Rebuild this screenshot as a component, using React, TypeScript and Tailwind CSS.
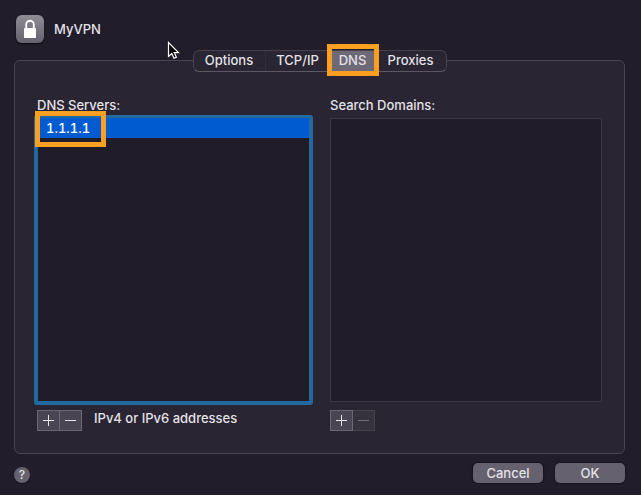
import { useState } from 'react';

const tabs = [
  { name: 'Options', width: 'w-[72px]' },
  { name: 'TCP/IP', width: 'w-[64px]' },
  { name: 'DNS', width: 'w-[46px]' },
  { name: 'Proxies', width: 'w-[70px]' },
];

const dnsServers = ['1.1.1.1'];

function LockIcon() {
  return (
    <div className="flex h-7 w-7 items-center justify-center rounded-md bg-linear-to-b from-[#918d97] to-[#65616d] shadow-[0_1px_2px_#0d0a12]">
      <svg width="14" height="20" viewBox="0 0 14 20" aria-hidden="true">
        <path d="M3.2 9.5V5.6a3.8 3.8 0 0 1 7.6 0v3.9" fill="none" stroke="#fff" strokeWidth="1.9" />
        <rect x="1" y="9" width="12" height="10" rx="0.8" fill="#fff" />
      </svg>
    </div>
  );
}

function Pointer() {
  return (
    <svg className="absolute top-[41px] left-[167px]" width="13" height="19" viewBox="0 0 13 19" aria-hidden="true">
      <path
        d="M1.5 1.5v14l3.3-3 2.2 4.8 2.4-1.1-2.1-4.5h4.2z"
        fill="#08060a"
        stroke="#fff"
        strokeWidth="1.2"
      />
    </svg>
  );
}

function ListButtons({ label, canRemove }: { label: string; canRemove: boolean }) {
  return (
    <div className="flex h-[21px]">
      <button
        aria-label={`Add ${label}`}
        className="flex w-[23px] items-center justify-center border border-[#6b6774] bg-[#494552] text-[#e6e3ea]"
      >
        <svg width="11" height="11" viewBox="0 0 11 11" stroke="currentColor">
          <path d="M0 5.5h11M5.5 0v11" />
        </svg>
      </button>
      <button
        aria-label={`Remove ${label}`}
        disabled={!canRemove}
        className="flex w-[22px] items-center justify-center border border-l-0 border-[#6b6774] bg-[#494552] text-[#e6e3ea] disabled:border-[#46424e] disabled:bg-[#36323e] disabled:text-[#716d79]"
      >
        <svg width="11" height="11" viewBox="0 0 11 11" stroke="currentColor">
          <path d="M0 5.5h11" />
        </svg>
      </button>
    </div>
  );
}

export default function App() {
  const [activeTab, setActiveTab] = useState('DNS');

  return (
    <main className="relative min-h-screen bg-[#211d2a] pt-[15px] pr-4 pb-3 pl-3.5 font-['Inter','Liberation_Sans',sans-serif] text-[13px] leading-4 font-medium text-[#e4e1e8]">
      {/* Header */}
      <header className="flex items-center gap-2.5 pl-0.5">
        <LockIcon />
        <h1>MyVPN</h1>
      </header>
      <Pointer />

      {/* Tabs sit across the top edge of the panel */}
      <div role="tablist" className="relative z-10 mx-auto mt-[7px] -mb-3 flex h-[22px] w-fit rounded-md border border-[#45414d] border-b-[#5b5763] bg-[#292532]">
        {tabs.map(({ name, width }, index) => (
          <button
            key={name}
            role="tab"
            aria-selected={activeTab === name}
            onClick={() => setActiveTab(name)}
            className={`relative ${width} pb-0.5 ${activeTab === name ? 'bg-[#6d6977]' : ''} ${
              index === 0 ? 'border-r border-[#312d3a]' : ''
            }`}
          >
            {name}
            {name === 'DNS' && (
              <span className="pointer-events-none absolute -inset-x-[3px] -top-[7px] -bottom-[5px] border-5 border-[#fb9f23]" />
            )}
          </button>
        ))}
      </div>

      <section className="rounded-md border border-[#484450] bg-[#292532] px-[22px] pt-9 pb-[22px]">
        <div className="grid grid-cols-[273fr_272fr] gap-5">
          {/* DNS servers */}
          <div>
            <h2 id="dns-label">DNS Servers:</h2>
            <ul
              role="listbox"
              aria-labelledby="dns-label"
              className="relative mt-[5px] h-[284px] rounded-[1px] border border-t-0 border-[#22699f] bg-[#201c29] tabular-nums shadow-[0_0_0_3px_#22699f]"
            >
              {dnsServers.map((server) => (
                <li key={server} role="option" aria-selected="true" className="h-5 bg-[#005bd1] pl-2 leading-5 text-white">
                  {server}
                </li>
              ))}
              <span className="pointer-events-none absolute -top-[7px] -left-[3px] h-9 w-[71px] border-5 border-[#fb9f23]" />
            </ul>
            <div className="mt-2 flex gap-3">
              <ListButtons label="DNS server" canRemove />
              <p>IPv4 or IPv6 addresses</p>
            </div>
          </div>

          {/* Search domains */}
          <div>
            <h2 id="search-label">Search Domains:</h2>
            <ul
              role="listbox"
              aria-labelledby="search-label"
              className="mt-[5px] mb-2 h-[284px] border border-[#3b3743] bg-[#201c29]"
            />
            <ListButtons label="search domain" canRemove={false} />
          </div>
        </div>
      </section>

      {/* Footer */}
      <footer className="mt-[9px] flex items-start gap-3">
        <button
          aria-label="Help"
          className="mt-1 mr-auto h-4 w-4 rounded-full bg-[#65616d] text-[12px] shadow-[0_1px_1px_#15111b]"
        >
          ?
        </button>
        <button className="h-5 w-[70px] rounded-[5px] bg-[#65616e] shadow-[0_0_1px_1px_#18141f]">Cancel</button>
        <button className="h-5 w-[70px] rounded-[5px] bg-[#65616e] shadow-[0_0_1px_1px_#18141f]">OK</button>
      </footer>
    </main>
  );
}
